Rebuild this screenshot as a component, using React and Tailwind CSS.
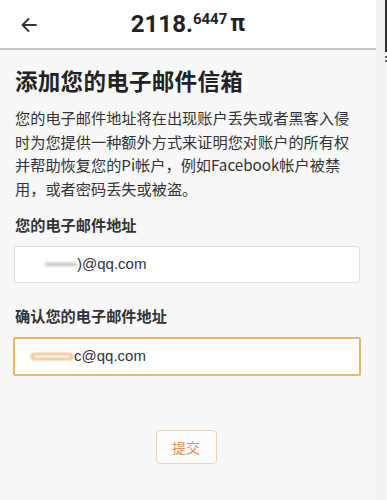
import React from "react";

export default function App() {
  const cjk = { fontFamily: '"Noto Sans CJK SC", "Noto Sans", sans-serif' };
  return (
    <div className="flex w-[387px] h-[500px] overflow-hidden bg-[#f7f7f7]" style={cjk}>
      <div className="w-[376px] flex flex-col bg-[#f8f8f8]">
        <div className="h-[50px] bg-white border-b-2 border-[#c4c4c4] flex items-center relative">
          <svg className="absolute left-[20px] top-[17px]" width="18" height="16" viewBox="0 0 18 16" fill="none" stroke="#333" strokeWidth="1.8" strokeLinecap="round" strokeLinejoin="round">
            <path d="M16 8H3M8.5 2L2.5 8l6 6" />
          </svg>
          <div className="w-full flex justify-center">
            <div className="flex items-start text-[#222] font-bold" style={{ fontFamily: "Roboto, sans-serif" }}>
              <span className="text-[24px] leading-[30px]">2118.</span>
              <span className="text-[15px] leading-[18px] mt-[1px]">6447</span>
              <span className="text-[23px] leading-[30px] ml-[3px]">π</span>
            </div>
          </div>
        </div>
        <div className="px-[15px] pt-[14px]">
          <h1 className="text-[22.5px] leading-[32px] font-bold text-[#222] tracking-[0.3px]">添加您的电子邮件信箱</h1>
          <p className="mt-[10px] text-[15.2px] leading-[23.5px] text-[#333]">
            您的电子邮件地址将在出现账户丢失或者黑客入侵时为您提供一种额外方式来证明您对账户的所有权并帮助恢复您的Pi帐户，例如Facebook帐户被禁用，或者密码丢失或被盗。
          </p>
          <div className="mt-[13px] text-[15.2px] leading-[22px] font-bold text-[#333]">您的电子邮件地址</div>
          <div className="mt-[11px] -ml-[1px] w-[346px] h-[37px] bg-white border border-[#e0e0e0] rounded-[3px] flex items-center pl-[30px] text-[15px] text-[#333]" style={{ fontFamily: '"Liberation Sans", Arial, sans-serif' }}>
            <span className="w-[32px] h-[3px] bg-[#bbb] blur-[1.5px]" />
            <span>)@qq.com</span>
          </div>
          <div className="mt-[21px] text-[15.2px] leading-[22px] font-bold text-[#333]">确认您的电子邮件地址</div>
          <div className="mt-[11px] -ml-[2px] w-[348px] h-[39px] bg-white border-2 border-[#e8b861] rounded-[2px] flex items-center pl-[16px] text-[15px] text-[#333]" style={{ fontFamily: '"Liberation Sans", Arial, sans-serif' }}>
            <span className="w-[42px] h-[7px] border-2 border-[#e3b25e] rounded-full blur-[1px] mr-[1px]" />
            <span>c@qq.com</span>
          </div>
          <div className="flex justify-center mt-[54px] pr-[1px]">
            <button className="w-[61px] h-[34px] border border-[#f3cfae] rounded-[4px] text-[14px] text-[#e5914f] bg-[#fcfcfc] ml-[-3px]">提交</button>
          </div>
        </div>
      </div>
      <div className="flex-1 flex">
        <div className="w-[9px] bg-[#f3f3f3]" />
        <div className="w-[2px] flex flex-col">
          <div className="h-[52px] bg-[#333]" />
          <div className="h-[4px]" />
          <div className="h-[2px] bg-[#666]" />
          <div className="h-[2px]" />
          <div className="h-[2px] bg-[#666]" />
        </div>
      </div>
    </div>
  );
}
